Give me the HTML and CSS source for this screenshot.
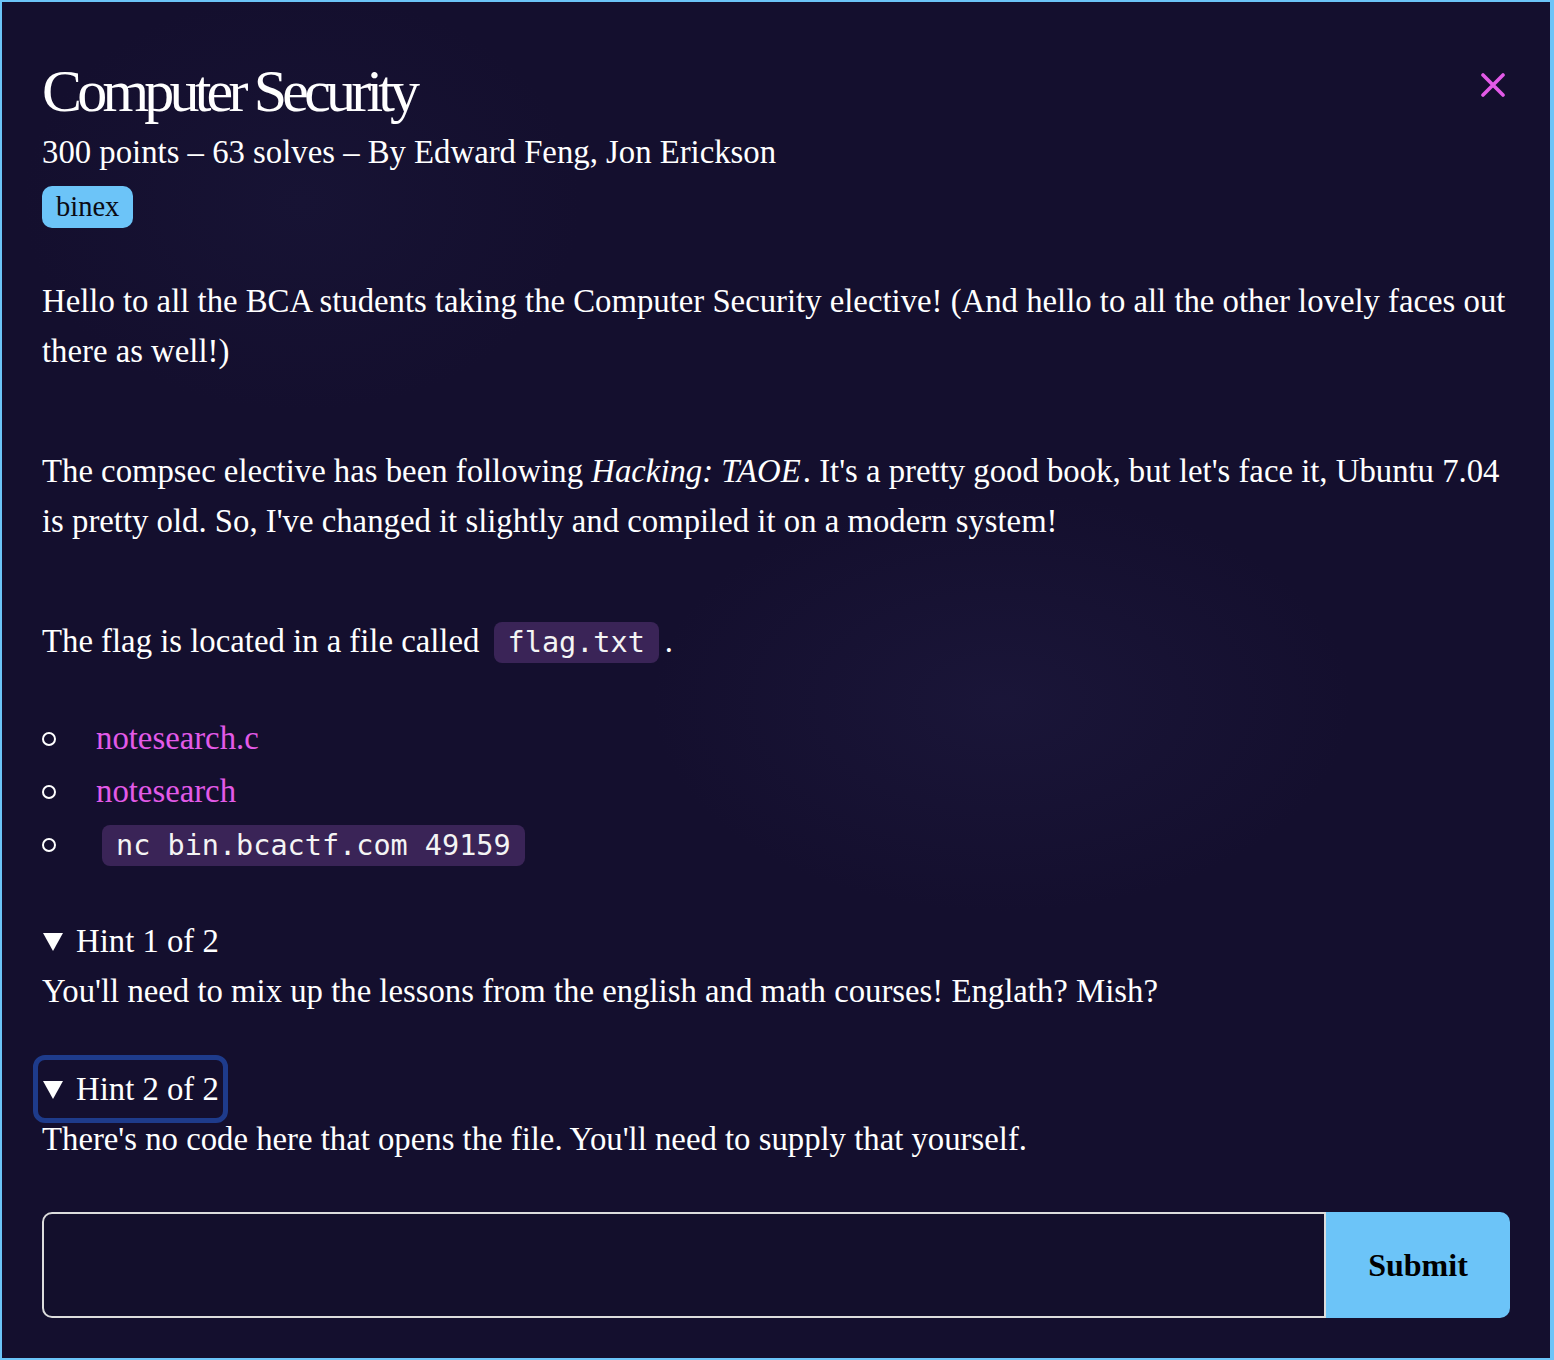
FILE: index.html
```html
<!DOCTYPE html>
<html lang="en">
<head>
<meta charset="utf-8">
<title>Computer Security</title>
<link rel="stylesheet" href="styles.css">
</head>
<body>
<div class="modal">
  <header class="head">
    <div class="head-text">
      <h1 class="title">Computer Security</h1>
      <p class="meta">300 points – 63 solves – By Edward Feng, Jon Erickson</p>
      <span class="tag">binex</span>
    </div>
    <button class="close" type="button" aria-label="Close">
      <svg width="24" height="24" viewBox="0 0 24 24"><path d="M2 2 L22 22 M22 2 L2 22" stroke="#e35ae8" stroke-width="3.6" stroke-linecap="round" fill="none"/></svg>
    </button>
  </header>

  <div class="desc">
    <p>Hello to all the BCA students taking the Computer Security elective! (And hello to all the other lovely faces out there as well!)</p>
    <p>The compsec elective has been following <em>Hacking: TAOE</em>. It's a pretty good book, but let's face it, Ubuntu 7.04 is pretty old. So, I've changed it slightly and compiled it on a modern system!</p>
    <p>The flag is located in a file called <code>flag.txt</code>.</p>
    <ul class="files">
      <li><a href="#">notesearch.c</a></li>
      <li><a href="#">notesearch</a></li>
      <li><code>nc bin.bcactf.com 49159</code></li>
    </ul>
  </div>

  <details class="hint" open>
    <summary><svg class="tri" width="20" height="18" viewBox="0 0 20 18"><polygon points="0,0 20,0 10,18" fill="#fff"/></svg>Hint 1 of 2</summary>
    <div class="hint-body">You'll need to mix up the lessons from the english and math courses! Englath? Mish?</div>
  </details>

  <details class="hint" open>
    <summary class="focused"><svg class="tri" width="20" height="18" viewBox="0 0 20 18"><polygon points="0,0 20,0 10,18" fill="#fff"/></svg>Hint 2 of 2</summary>
    <div class="hint-body">There's no code here that opens the file. You'll need to supply that yourself.</div>
  </details>

  <form class="flag" onsubmit="return false">
    <input class="flag-input" type="text" aria-label="Flag">
    <button class="submit" type="submit">Submit</button>
  </form>
</div>
</body>
</html>
```

FILE: styles.css
```css
* { box-sizing: border-box; }

html, body {
  margin: 0;
  padding: 0;
  background: #6cc4f8;
}

body {
  font-family: "Liberation Serif", "Times New Roman", serif;
  color: #ffffff;
  font-size: 32.75px;
}

.modal {
  min-height: 1360px;
  border: 2px solid #6cc4f8;
  border-right-width: 4px;
  padding: 40px;
  background:
    radial-gradient(ellipse 500px 300px at 1000px 700px, rgba(40, 36, 80, 0.3), transparent 70%),
    radial-gradient(ellipse 400px 300px at 300px 200px, rgba(30, 28, 66, 0.3), transparent 70%),
    #140f2e;
}

.head {
  display: flex;
  justify-content: space-between;
  align-items: flex-start;
}

.title {
  margin: 19px 0 0;
  font-size: 60px;
  line-height: 60px;
  font-weight: normal;
  letter-spacing: -4.8px;
}

.meta {
  margin: 6px 0 0;
  line-height: 50px;
}

.tag {
  display: inline-block;
  margin-top: 9px;
  height: 42px;
  line-height: 42px;
  padding: 0 14px;
  border-radius: 10px;
  background: #6cc4f8;
  color: #0b0b14;
  font-size: 28.5px;
}

.close {
  margin: 31px 5px 0 0;
  padding: 0;
  width: 24px;
  height: 24px;
  border: 0;
  background: none;
  cursor: pointer;
}

.close svg { display: block; }

.desc { margin-top: 48px; }

.desc p {
  margin: 0 0 70px;
  line-height: 50px;
}

.desc em { padding-right: 2px; }

.desc p:last-of-type { margin-bottom: 44px; }

code {
  font-family: "DejaVu Sans Mono", "Liberation Mono", monospace;
  font-size: 28.5px;
  background: #3a2457;
  color: #f4f4f4;
  border-radius: 8px;
  padding: 4px 14px;
  margin: 0 6px;
}

.files {
  list-style: none;
  margin: 0;
  padding: 0;
}

.files li {
  line-height: 53px;
  height: 53px;
}

.files li::before {
  content: "";
  display: inline-block;
  vertical-align: middle;
  width: 10px;
  height: 10px;
  border: 2px solid #ffffff;
  border-radius: 50%;
  margin: -4px 40px 0 0;
}

.files a {
  color: #e35ae8;
  text-decoration: none;
}

.hint { margin-top: 45px; }
.hint + .hint { margin-top: 48px; }

.hint summary {
  display: flex;
  align-items: center;
  width: fit-content;
  list-style: none;
  line-height: 50px;
  height: 50px;
  cursor: pointer;
}

.hint summary::-webkit-details-marker { display: none; }

.tri {
  display: block;
  margin: 2px 13px 0 1px;
}

.focused {
  outline: 5px solid #1e3b8b;
  outline-offset: 4px;
  border-radius: 3px;
}

.hint-body { line-height: 50px; }

.flag {
  display: flex;
  margin-top: 48px;
  height: 106px;
}

.flag-input {
  flex: 1;
  height: 106px;
  border: 2px solid #dcdcdc;
  border-radius: 10px 0 0 10px;
  background: #130f2c;
  color: #fff;
  font-size: 32px;
  padding: 0 20px;
}

.submit {
  width: 184px;
  height: 106px;
  border: 0;
  border-radius: 0 10px 10px 0;
  background: #6cc4f8;
  color: #000;
  font-family: "Liberation Serif", "Times New Roman", serif;
  font-weight: bold;
  font-size: 32px;
  cursor: pointer;
}
```
